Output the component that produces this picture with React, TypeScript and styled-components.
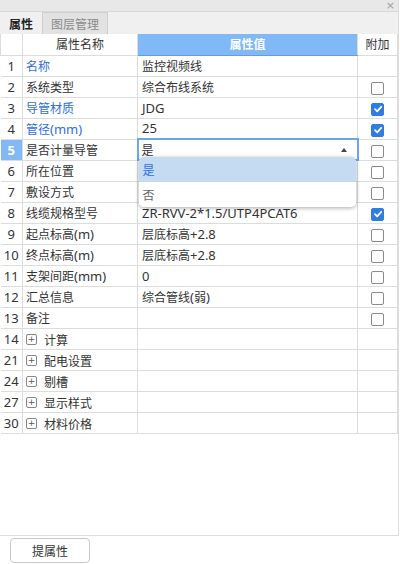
import React from 'react';
import styled, { createGlobalStyle } from 'styled-components';

const GlobalStyle = createGlobalStyle`
  html, body {
    margin: 0;
    padding: 0;
    background: #ffffff;
  }
  body {
    font-family: "Noto Sans CJK SC", "Noto Sans", sans-serif;
    font-size: 12px;
    color: #333333;
  }
`;

interface Row {
  no: number;
  name: string;
  value: string;
  blue?: boolean;
  check?: boolean | null;
  group?: boolean;
}

const rows: Row[] = [
  { no: 1, name: '名称', value: '监控视频线', blue: true, check: null },
  { no: 2, name: '系统类型', value: '综合布线系统', check: false },
  { no: 3, name: '导管材质', value: 'JDG', blue: true, check: true },
  { no: 4, name: '管径(mm)', value: '25', blue: true, check: true },
  { no: 5, name: '是否计量导管', value: '是', check: false },
  { no: 6, name: '所在位置', value: '', check: false },
  { no: 7, name: '敷设方式', value: '', check: false },
  { no: 8, name: '线缆规格型号', value: 'ZR-RVV-2*1.5/UTP4PCAT6', check: true },
  { no: 9, name: '起点标高(m)', value: '层底标高+2.8', check: false },
  { no: 10, name: '终点标高(m)', value: '层底标高+2.8', check: false },
  { no: 11, name: '支架间距(mm)', value: '0', check: false },
  { no: 12, name: '汇总信息', value: '综合管线(弱)', check: false },
  { no: 13, name: '备注', value: '', check: false },
  { no: 14, name: '计算', value: '', group: true },
  { no: 21, name: '配电设置', value: '', group: true },
  { no: 24, name: '剔槽', value: '', group: true },
  { no: 27, name: '显示样式', value: '', group: true },
  { no: 30, name: '材料价格', value: '', group: true },
];

const ACTIVE_ROW = 5;

// latin runs get a slightly larger size, like the YaHei-style UI font
function Mixed({ text }: { text: string }) {
  const parts = text.match(/[\u4e00-\u9fff]+|[^\u4e00-\u9fff]+/g) || [];
  return (
    <>
      {parts.map((p, i) => (/[\u4e00-\u9fff]/.test(p) ? <span key={i}>{p}</span> : <Latin key={i}>{p}</Latin>))}
    </>
  );
}

export default function App() {
  return (
    <>
      <GlobalStyle />
      <Panel>
        <TitleBar>
          <CloseBtn>×</CloseBtn>
        </TitleBar>
        <TabStrip>
          <Tab active>属性</Tab>
          <Tab>图层管理</Tab>
        </TabStrip>
        <Grid>
          <colgroup>
            <col style={{ width: 22 }} />
            <col style={{ width: 115 }} />
            <col style={{ width: 220 }} />
            <col style={{ width: 40 }} />
          </colgroup>
          <thead>
            <tr>
              <HeadCell />
              <HeadCell>属性名称</HeadCell>
              <HeadCell highlight>属性值</HeadCell>
              <HeadCell>附加</HeadCell>
            </tr>
          </thead>
          <tbody>
            {rows.map((r) => (
              <tr key={r.no}>
                <NumCell active={r.no === ACTIVE_ROW}>{r.no}</NumCell>
                {r.group ? (
                  <NameCell>
                    <GroupLabel>
                      <PlusBox>+</PlusBox>
                      {r.name}
                    </GroupLabel>
                  </NameCell>
                ) : (
                  <NameCell blue={r.blue}>
                    <Mixed text={r.name} />
                  </NameCell>
                )}
                {r.no === ACTIVE_ROW ? (
                  <EditCell>
                    <SelectBox>
                      {r.value}
                      <Caret />
                    </SelectBox>
                    <DropList>
                      <Option selected>是</Option>
                      <Option>否</Option>
                    </DropList>
                  </EditCell>
                ) : (
                  <ValueCell>
                    <Mixed text={r.value} />
                  </ValueCell>
                )}
                <CheckCell>{r.check !== undefined && r.check !== null && <CheckBox checked={r.check} />}</CheckCell>
              </tr>
            ))}
          </tbody>
        </Grid>
      </Panel>
      <Footer>
        <Button>提属性</Button>
      </Footer>
    </>
  );
}

const CheckBox = ({ checked }: { checked: boolean }) => (
  <Box checked={checked}>
    {checked && (
      <svg width="10" height="10" viewBox="0 0 10 10">
        <path d="M2 5.2 L4.2 7.3 L8.2 2.8" stroke="#fff" strokeWidth="1.8" fill="none" strokeLinecap="round" strokeLinejoin="round" />
      </svg>
    )}
  </Box>
);

const Latin = styled.span`
  font-family: "Noto Sans", sans-serif;
  font-size: 13px;
`;

const Panel = styled.div`
  width: 399px;
  height: 536px;
  border-right: 1px solid #dddddd;
  border-bottom: 1px solid #dddddd;
  box-sizing: border-box;
  display: flex;
  flex-direction: column;
`;

const TitleBar = styled.div`
  height: 11px;
  background: #e8e8e8;
  border-bottom: 1px solid #d8d8d8;
  display: flex;
  justify-content: flex-end;
  align-items: center;
  padding-right: 3px;
  overflow: visible;
`;

const CloseBtn = styled.span`
  font-family: "DejaVu Sans", sans-serif;
  font-size: 11px;
  line-height: 11px;
  height: 11px;
  color: #a0a0a0;
`;

const TabStrip = styled.div`
  height: 22px;
  background: #f0f0f0;
  display: flex;
  align-items: stretch;
`;

const Tab = styled.div<{ active?: boolean }>`
  padding: 0 8px;
  display: flex;
  align-items: center;
  font-size: 12px;
  color: ${(p) => (p.active ? '#222' : '#8a8a8a')};
  font-weight: ${(p) => (p.active ? 600 : 400)};
  background: ${(p) => (p.active ? '#f0f0f0' : '#e2e2e2')};
  border: 1px solid ${(p) => (p.active ? 'transparent' : '#cfcfcf')};
  border-bottom: none;
  border-top: ${(p) => (p.active ? 'none' : '1px solid #cfcfcf')};
  box-sizing: border-box;
`;

const Grid = styled.table`
  width: 397px;
  border-collapse: collapse;
  table-layout: fixed;
  background: #fff;

  td, th {
    height: 21px;
    padding: 0;
    border: 1px solid #dcdcdc;
    box-sizing: border-box;
    line-height: 16px;
  }
`;

const HeadCell = styled.th<{ highlight?: boolean }>`
  font-weight: ${(p) => (p.highlight ? 700 : 400)};
  font-size: 12px;
  text-align: center;
  color: ${(p) => (p.highlight ? '#ffffff' : '#333')};
  background: ${(p) => (p.highlight ? '#80b9f5' : '#fff')};
  && {
    border-top: none;
    ${(p) => (p.highlight ? 'border-bottom: 1px solid #5d9ee6;' : '')}
  }
`;

const NumCell = styled.td<{ active?: boolean }>`
  text-align: center;
  font-family: "Noto Sans", sans-serif;
  font-size: 13px;
  color: ${(p) => (p.active ? '#fff' : '#333')};
  font-weight: ${(p) => (p.active ? 700 : 400)};
  background: ${(p) => (p.active ? '#80b9f5' : '#fff')};
  && {
    border-left: none;
  }
`;

const NameCell = styled.td<{ blue?: boolean }>`
  padding-left: 3px !important;
  color: ${(p) => (p.blue ? '#2f6fdc' : '#333')};
  white-space: nowrap;
  overflow: hidden;
`;

const GroupLabel = styled.span`
  display: inline-flex;
  align-items: center;
  gap: 7px;
`;

const PlusBox = styled.span`
  width: 9px;
  height: 9px;
  border: 1px solid #888;
  border-radius: 2px;
  display: inline-flex;
  align-items: center;
  justify-content: center;
  font-family: "DejaVu Sans", sans-serif;
  font-size: 9px;
  line-height: 9px;
  color: #555;
`;

const ValueCell = styled.td`
  padding-left: 4px !important;
  white-space: nowrap;
  overflow: hidden;
`;

const EditCell = styled.td`
  position: relative;
  && {
    border: 2px solid #6aa6e8;
  }
`;

const SelectBox = styled.div`
  display: flex;
  align-items: center;
  justify-content: space-between;
  padding: 0 10px 0 3px;
  height: 100%;
`;

const Caret = styled.span`
  width: 0;
  height: 0;
  border-left: 3px solid transparent;
  border-right: 3px solid transparent;
  border-bottom: 4px solid #444;
`;

const DropList = styled.div`
  position: absolute;
  left: 0;
  top: 17px;
  width: 217px;
  background: #fff;
  border-radius: 5px;
  box-shadow: 0 1px 4px rgba(0, 0, 0, 0.35);
  overflow: hidden;
  z-index: 2;
`;

const Option = styled.div<{ selected?: boolean }>`
  height: 25px;
  display: flex;
  align-items: center;
  padding-left: 4px;
  background: ${(p) => (p.selected ? '#c4dbf1' : '#fff')};
  color: ${(p) => (p.selected ? '#2f6fdc' : '#666')};
`;

const CheckCell = styled.td`
  text-align: center;
  vertical-align: middle;
`;

const Box = styled.span<{ checked: boolean }>`
  display: inline-flex;
  align-items: center;
  justify-content: center;
  width: 13px;
  height: 13px;
  box-sizing: border-box;
  border-radius: 2px;
  border: 1px solid ${(p) => (p.checked ? '#2f7de1' : '#8a8a8a')};
  background: ${(p) => (p.checked ? '#2f7de1' : '#fff')};
  vertical-align: middle;
`;

const Footer = styled.div`
  padding: 2px 0 0 10px;
`;

const Button = styled.button`
  width: 80px;
  height: 25px;
  border: 1px solid #c8c8c8;
  border-radius: 4px;
  background: #fff;
  font-family: "Noto Sans CJK SC", sans-serif;
  font-size: 12px;
  color: #333;
  padding: 0;
`;
